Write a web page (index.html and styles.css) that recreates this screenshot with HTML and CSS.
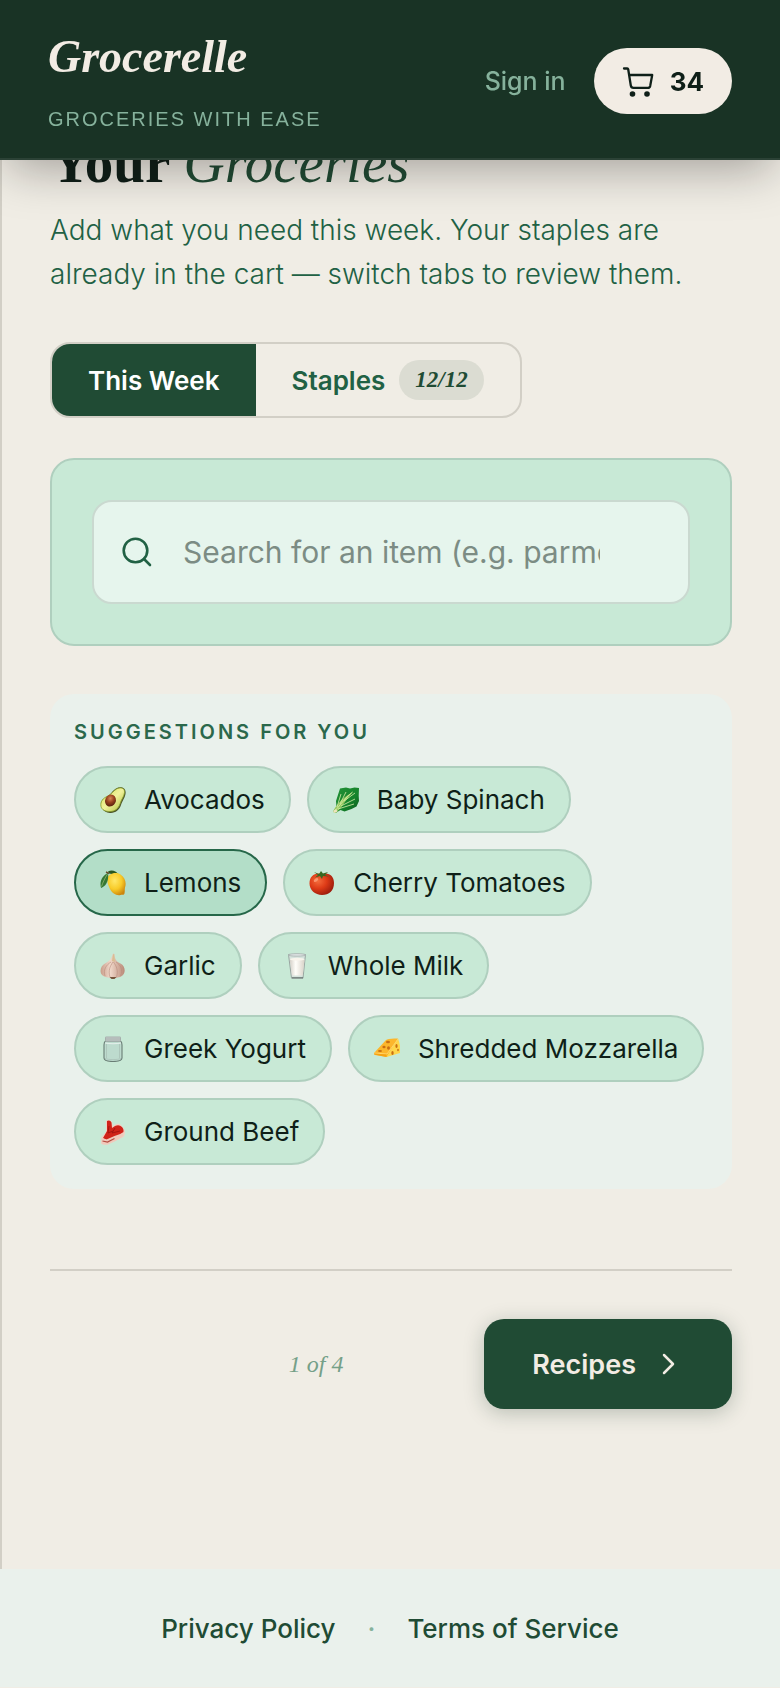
FILE: index.html
```html
<!DOCTYPE html>
<html lang="en">
<head>
<meta charset="utf-8">
<meta name="viewport" content="width=device-width, initial-scale=1">
<title>Grocerelle – Your Groceries</title>
<link rel="stylesheet" href="styles.css">
</head>
<body>
<header class="site-header">
  <a class="brand" href="#">
    <span class="brand-name">Grocerelle</span>
    <span class="brand-tagline">GROCERIES WITH EASE</span>
  </a>
  <nav class="header-actions" aria-label="Account">
    <a class="sign-in" href="#">Sign in</a>
    <button class="cart-button" type="button" aria-label="Cart, 34 items">
      <svg class="cart-icon" viewBox="0 0 32 32" aria-hidden="true">
        <path d="M2 3.500h3.300q.7 0 .9.800l2.600 16.200q.4 2.300 2.600 2.300h14.500q1.900 0 2.300-1.900l2-10.900H7.200" fill="none" stroke="currentColor" stroke-width="2.300" stroke-linecap="round" stroke-linejoin="round"/>
        <circle cx="10.500" cy="29" r="2.800" fill="currentColor"/><circle cx="25" cy="29" r="2.800" fill="currentColor"/>
      </svg>
      <span>34</span>
    </button>
  </nav>
</header>

<main class="page">
  <h1 class="page-title">Your <em>Groceries</em></h1>
  <p class="page-intro">Add what you need this week. Your staples are already in the cart — switch tabs to review them.</p>

  <div class="tabs">
    <button class="tab tab-active" type="button">This Week</button>
    <button class="tab" type="button">Staples <span class="tab-count">12/12</span></button>
  </div>

  <section class="search-panel">
    <label class="search-box">
      <svg class="search-icon" viewBox="0 0 30 30" aria-hidden="true">
        <circle cx="13.500" cy="13.500" r="11.800" fill="none" stroke="currentColor" stroke-width="2.600"/>
        <path d="M22 22l6 6" stroke="currentColor" stroke-width="2.600" stroke-linecap="round"/>
      </svg>
      <input class="search-input" type="text" aria-label="Search for an item" placeholder="Search for an item (e.g. parmesan)">
    </label>
  </section>

  <section class="suggestions">
    <h2 class="suggestions-title">SUGGESTIONS FOR YOU</h2>
    <div class="chips">
      <button class="chip" type="button">
        <svg class="chip-icon" viewBox="0 0 26 26" aria-hidden="true">
          <defs><linearGradient id="avoFlesh" x1="0" y1="0" x2="1" y2="1"><stop offset="0" stop-color="#d2dc55"/><stop offset=".5" stop-color="#f1f29b"/><stop offset="1" stop-color="#a9bd38"/></linearGradient><radialGradient id="avoPit" cx=".4" cy=".35" r=".65"><stop offset="0" stop-color="#d88a55"/><stop offset=".5" stop-color="#9c4420"/><stop offset="1" stop-color="#5c230e"/></radialGradient></defs>
          <path d="M2 21C-.5 16 2 12 7 9.500c4-2 5-5.500 9-8C20-.8 26 0 25.600 6c-.3 4.500-3 7-4.600 12-1.600 5-6 8.200-11 8-4-.2-6.500-2-8-5z" fill="#4c5228"/>
          <path d="M1 19.500C0 14.500 3 11 8 9c4-2 5-5 8.500-7C20 0 25 .5 24.500 5.500 24 10 21.500 12 20 17c-1.500 4.500-5 7.500-10 7.500S2 23 1 19.500z" fill="url(#avoFlesh)" stroke="#87a02b" stroke-width=".8"/>
          <ellipse cx="10.500" cy="13.600" rx="5.300" ry="6.100" transform="rotate(25 10.500 13.600)" fill="url(#avoPit)"/>
        </svg>Avocados</button>
      <button class="chip" type="button">
        <svg class="chip-icon" viewBox="0 0 26 26" aria-hidden="true">
          <defs><linearGradient id="leaf" x1="0" y1="0" x2="1" y2="1"><stop offset="0" stop-color="#249238"/><stop offset=".6" stop-color="#15832b"/><stop offset="1" stop-color="#0b571c"/></linearGradient></defs>
          <path d="M7 1.500L13 .5l4 1 4.500-1L26 1l-.3 8 .3 5-2.500 5.500-5 2.500-7 2.500-4-1.500L2.500 26 0 24.500 3.500 20 3 14z" fill="url(#leaf)"/>
          <path d="M0 24.500C4 16 12 9 20 5c-6 6-10 14-16.500 20.500L1.500 26z" fill="#96c961"/>
          <path d="M1.500 24.500C8 17 13 10 19.500 5M4 20l4-13M7 17l6-12M8 19l14-7M5 22l16-5M11 14l11-8" fill="none" stroke="#d9eeaa" stroke-width=".8"/>
          <path d="M0 24l3-2 1.500 2.500-3 1.500z" fill="#eee4bd"/>
        </svg>Baby Spinach</button>
      <button class="chip chip-selected" type="button">
        <svg class="chip-icon" viewBox="0 0 26 26" aria-hidden="true">
          <defs><radialGradient id="lemon" cx=".4" cy=".35" r=".7"><stop offset="0" stop-color="#ffe869"/><stop offset=".55" stop-color="#f8cb28"/><stop offset="1" stop-color="#cc850d"/></radialGradient></defs>
          <path d="M8 1.500c4-2 8-.5 10 2.500-3 .5-6 .2-9-.5z" fill="#29571f"/>
          <path d="M7.500 9c0-5 8-8 13-4.500 5 3 6 9 4.500 13-.5 2 0 4-.5 6-.5 2-2.500 1-4 1.500-4 1-9-2-11-7C8 14.500 7 12 7.500 9z" fill="url(#lemon)"/>
          <path d="M8 3C3 5-1 11 1 18c5-2 8-7 7-15z" fill="#357834"/><path d="M7.500 4C5 8 3 12 1.500 16.500" stroke="#87af65" stroke-width=".9" fill="none"/><path d="M6 2l3 1.500" stroke="#69502d" stroke-width="1.500"/>
        </svg>Lemons</button>
      <button class="chip" type="button">
        <svg class="chip-icon" viewBox="0 0 26 26" aria-hidden="true">
          <defs><radialGradient id="tomato" cx=".35" cy=".35" r=".7"><stop offset="0" stop-color="#f46c3c"/><stop offset=".5" stop-color="#de3b17"/><stop offset="1" stop-color="#9c1c0d"/></radialGradient></defs>
          <path d="M13 4c7-2 12 2 12 9 0 8-5 12-12 12S.5 20 .5 13.500C.5 6 6 2 13 4z" fill="url(#tomato)"/>
          <path d="M5 2l5 2 2-3 2 2.500 5-1.500-3 3 4 1.500-6-.5-1 3-2-3-5 1.500L9 5z" fill="#376821"/>
          <ellipse cx="7" cy="10" rx="2.500" ry="1.500" transform="rotate(-35 7 10)" fill="#ffab86" opacity=".7"/>
        </svg>Cherry Tomatoes</button>
      <button class="chip" type="button">
        <svg class="chip-icon" viewBox="0 0 26 26" aria-hidden="true">
          <defs><linearGradient id="garlic" x1="0" y1="0" x2="1" y2="0"><stop offset="0" stop-color="#c99d8a"/><stop offset=".4" stop-color="#f0d8ca"/><stop offset="1" stop-color="#b98977"/></linearGradient></defs>
          <path d="M13 .5l1.500.5c0 5 2 8 6 9.500 4 2 5 7 3.500 10S19 25 13 25 2.500 23.500 1 20.500C-.5 16 2 12 5 10.500 10 8 11.500 5.500 13 .5z" fill="url(#garlic)"/>
          <path d="M13 9c-3 4-5 9-3 15M13.500 9c3 4 5 9 3 15M11 9c-5 3-8 8-6 14M16 9c5 3 7 8 4.500 14" stroke="#b88c7c" stroke-width=".6" fill="none"/>
          <path d="M9.500 24h7l-2 2h-3z" fill="#76543b"/><path d="M13 1.500L12 8l3 1-1-8z" fill="#d9bd92"/>
        </svg>Garlic</button>
      <button class="chip" type="button">
        <svg class="chip-icon" viewBox="0 0 26 26" aria-hidden="true">
          <defs><linearGradient id="milk"><stop offset="0" stop-color="#d5d0c8"/><stop offset=".4" stop-color="#fffefa"/><stop offset="1" stop-color="#d8d2c8"/></linearGradient></defs>
          <path d="M4.500 1.500h17L19 25.200H7.500z" fill="#d6e3dd" stroke="#929e9b" stroke-width=".9"/>
          <path d="M5.800 6.500h14.800l-1.900 16H8z" fill="url(#milk)"/><ellipse cx="13.200" cy="6.300" rx="7.300" ry="1.500" fill="#f8f4ec"/>
          <ellipse cx="13" cy="1.900" rx="8.600" ry="1.300" fill="#dce2e2" stroke="#a1aaa9" stroke-width=".7"/><path d="M8 24.800h11" stroke="#606c69" stroke-width="1"/>
        </svg>Whole Milk</button>
      <button class="chip" type="button">
        <svg class="chip-icon" viewBox="0 0 26 26" aria-hidden="true">
          <path d="M5.500 5C4 6 4 7 4 9v13c0 2.500 2 3.500 9 3.500s9-1 9-3.500V9c0-2 0-3-1.500-4z" fill="#bddbce" stroke="#697d75" stroke-width="1.100"/>
          <path d="M6.500 8v14M19.500 8v14M5 22.500c4 1.500 12 1.500 16 0" stroke="#a9c2b7" stroke-width=".8" fill="none"/><path d="M5 7c5 1 11 1 16 0" stroke="#e6f1ed" stroke-width="1" fill="none"/>
          <rect x="5" y=".5" width="16" height="5.300" rx="1.400" fill="#a6afad"/><path d="M6 2h14M6 4h14" stroke="#ced4d2" stroke-width=".8"/>
        </svg>Greek Yogurt</button>
      <button class="chip" type="button">
        <svg class="chip-icon" viewBox="0 0 26 26" aria-hidden="true">
          <path d="M0 17L12 4Q14 2 24 2.500L13 21 1 19z" fill="#fcb62c"/><path d="M24 2.500Q27 10 26 17l-13.500 4z" fill="#ffd64a"/><path d="M0 17l13 1 11-15" fill="none" stroke="#ffd469" stroke-width="1"/><path d="M0 17.500l12.500 1v2.500L0 18.500z" fill="#f6a314"/>
          <g fill="#c96f12"><ellipse cx="14" cy="6" rx="2" ry="1.200"/><ellipse cx="10" cy="11" rx="1.600" ry="1.200"/><ellipse cx="14.500" cy="12" rx="1.500" ry="1.800"/><ellipse cx="6" cy="15" rx="2" ry="1.100"/><ellipse cx="22.500" cy="10" rx="1.100" ry="2"/><ellipse cx="18.500" cy="17" rx="1.200" ry="2"/><ellipse cx="24" cy="14" rx=".8" ry="1.300"/></g>
        </svg>Shredded Mozzarella</button>
      <button class="chip" type="button">
        <svg class="chip-icon" viewBox="0 0 26 26" aria-hidden="true">
          <path d="M6 2Q9-.5 12 3l1 4q5-4 8-1l3.500 4.500Q26 14 23.500 18L15 22l-7 3.500q-5 1-7-1L1.500 18 6 13z" fill="#f0d0c4"/>
          <path d="M7 2q3-1.500 4.500 1.500L12 9l3-2q4-2 7 1 2.500 3 1 6-4 3-9 4l-7 3-4-2 4-7z" fill="#d02319"/>
          <path d="M1.500 19l5 1.500 8-3.500q6-1.500 9-4v4l-8 5-8 3.500q-5 .5-6-1.500z" fill="#efc9bb"/>
          <path d="M2.500 22l5 1 7-3.500" fill="none" stroke="#b54a3f" stroke-width="1.200"/><path d="M9 7l-1 7 5-2M15 9l-3 5 8-2" fill="none" stroke="#a01310" stroke-width=".9"/>
        </svg>Ground Beef</button>
    </div>
  </section>

  <nav class="pager" aria-label="Steps">
    <span class="pager-start"></span>
    <span class="pager-status">1 of 4</span>
    <button class="next-button" type="button">Recipes
      <svg class="next-icon" viewBox="0 0 24 24" aria-hidden="true"><path d="M8 3l9 9-9 9" fill="none" stroke="currentColor" stroke-width="2.500" stroke-linecap="round" stroke-linejoin="round"/></svg>
    </button>
  </nav>
</main>

<footer class="site-footer">
  <a href="#">Privacy Policy</a>
  <span class="footer-dot">·</span>
  <a href="#">Terms of Service</a>
</footer>
</body>
</html>
```
FILE: styles.css
```css
* {
  box-sizing: border-box;
}

body {
  margin: 0;
  background: #f0ede5;
  color: #0f1f18;
  font-family: Inter, "Liberation Sans", sans-serif;
  font-size: 26px;
}

button,
input {
  margin: 0;
  font: inherit;
  color: inherit;
}

button {
  cursor: pointer;
}

a {
  color: inherit;
  text-decoration: none;
}

.site-header {
  position: fixed;
  top: 0;
  left: 0;
  right: 0;
  z-index: 10;
  display: flex;
  align-items: center;
  justify-content: space-between;
  height: 160px;
  padding: 4px 48px 0;
  background: #193325;
  border-bottom: 2px solid #2b4236;
  box-shadow: 0 16px 48px -8px rgba(15, 10, 10, 0.35);
}

.brand {
  display: flex;
  flex-direction: column;
  gap: 24px;
}

.brand-name {
  font-family: "Liberation Serif", serif;
  font-size: 46px;
  font-style: italic;
  font-weight: 700;
  line-height: 52px;
  color: #f2ece4;
}

.brand-tagline {
  font-family: "Liberation Sans", sans-serif;
  font-size: 20px;
  line-height: 24px;
  letter-spacing: 2px;
  color: #86b29c;
}

.header-actions {
  display: flex;
  align-items: center;
  gap: 28px;
}

.sign-in {
  font-size: 25px;
  font-weight: 500;
  color: #86b29c;
}

.cart-button {
  display: flex;
  align-items: center;
  gap: 16px;
  height: 66px;
  padding: 0 28px;
  border: 0;
  border-radius: 33px;
  background: #f2ece4;
  font-weight: 700;
}

.cart-icon {
  width: 32px;
  height: 32px;
}

.page {
  padding: 128px 48px 160px;
  border-left: 2px solid #d2cfc6;
}

.page-title {
  margin: 0 0 10px;
  font-family: "Liberation Serif", serif;
  font-size: 57px;
  font-weight: 700;
  line-height: 70px;
}

.page-title em {
  font-weight: 400;
  color: #204b34;
}

.page-intro {
  margin: 0 0 46px;
  font-size: 28px;
  font-weight: 300;
  line-height: 44px;
  color: #216144;
}

.tabs {
  display: flex;
  width: fit-content;
  margin-bottom: 40px;
  border: 2px solid #d2cfc6;
  border-radius: 20px;
  overflow: hidden;
}

.tab {
  display: flex;
  align-items: center;
  gap: 14px;
  height: 72px;
  padding: 0 36px;
  border: 0;
  background: transparent;
  font-weight: 600;
  color: #216144;
}

.tab-active {
  background: #204b34;
  color: #fff;
}

.tab-count {
  padding: 0 16px;
  border-radius: 20px;
  background: #dbdcd2;
  font-family: "Liberation Serif", serif;
  font-size: 23px;
  font-style: italic;
  line-height: 40px;
  color: #204b34;
}

.search-panel {
  margin-bottom: 48px;
  padding: 40px;
  border: 2px solid #afcfbe;
  border-radius: 24px;
  background: #c8e9d6;
}

.search-box {
  display: flex;
  align-items: center;
  gap: 31px;
  height: 104px;
  padding: 0 88px 0 28px;
  border: 2px solid #cad9d0;
  border-radius: 20px;
  background: #e6f5ed;
}

.search-icon {
  flex: none;
  width: 30px;
  height: 30px;
  color: #216144;
}

.search-input {
  flex: 1;
  min-width: 0;
  padding: 0;
  border: 0;
  outline: 0;
  background: transparent;
  font-size: 30px;
}

.search-input::placeholder {
  color: #7c8c84;
  opacity: 1;
}

.suggestions {
  margin-bottom: 80px;
  padding: 24px;
  border-radius: 24px;
  background: #eaf1ec;
}

.suggestions-title {
  margin: 0 0 20px;
  font-size: 20px;
  font-weight: 600;
  line-height: 28px;
  letter-spacing: 3px;
  color: #2b684b;
}

.chips {
  display: flex;
  flex-wrap: wrap;
  gap: 16px;
}

.chip {
  display: flex;
  align-items: center;
  gap: 18px;
  height: 67px;
  padding: 0 24px;
  border: 2px solid #afcfbe;
  border-radius: 34px;
  background: #c8e9d6;
}

.chip-selected {
  border-color: #266749;
  background: #b3dec8;
}

.chip-icon {
  width: 26px;
  height: 26px;
}

.pager {
  display: flex;
  align-items: center;
  justify-content: space-between;
  padding-top: 48px;
  border-top: 2px solid #d2cfc6;
}

.pager-start {
  width: 98px;
}

.pager-status {
  font-family: "Liberation Serif", serif;
  font-size: 24px;
  font-style: italic;
  color: #75a088;
}

.next-button {
  display: flex;
  align-items: center;
  gap: 20px;
  height: 90px;
  padding: 0 52px 0 48px;
  border: 0;
  border-radius: 20px;
  background: #204b34;
  box-shadow: 0 4px 20px rgba(25, 51, 37, 0.25);
  font-size: 27px;
  font-weight: 600;
  color: #f2ece4;
}

.next-icon {
  width: 24px;
  height: 24px;
}

.site-footer {
  display: flex;
  align-items: center;
  justify-content: center;
  gap: 32px;
  height: 118px;
  background: #eaf1ec;
  font-weight: 500;
  color: #204b34;
}

.footer-dot {
  color: #86b29c;
}
```
